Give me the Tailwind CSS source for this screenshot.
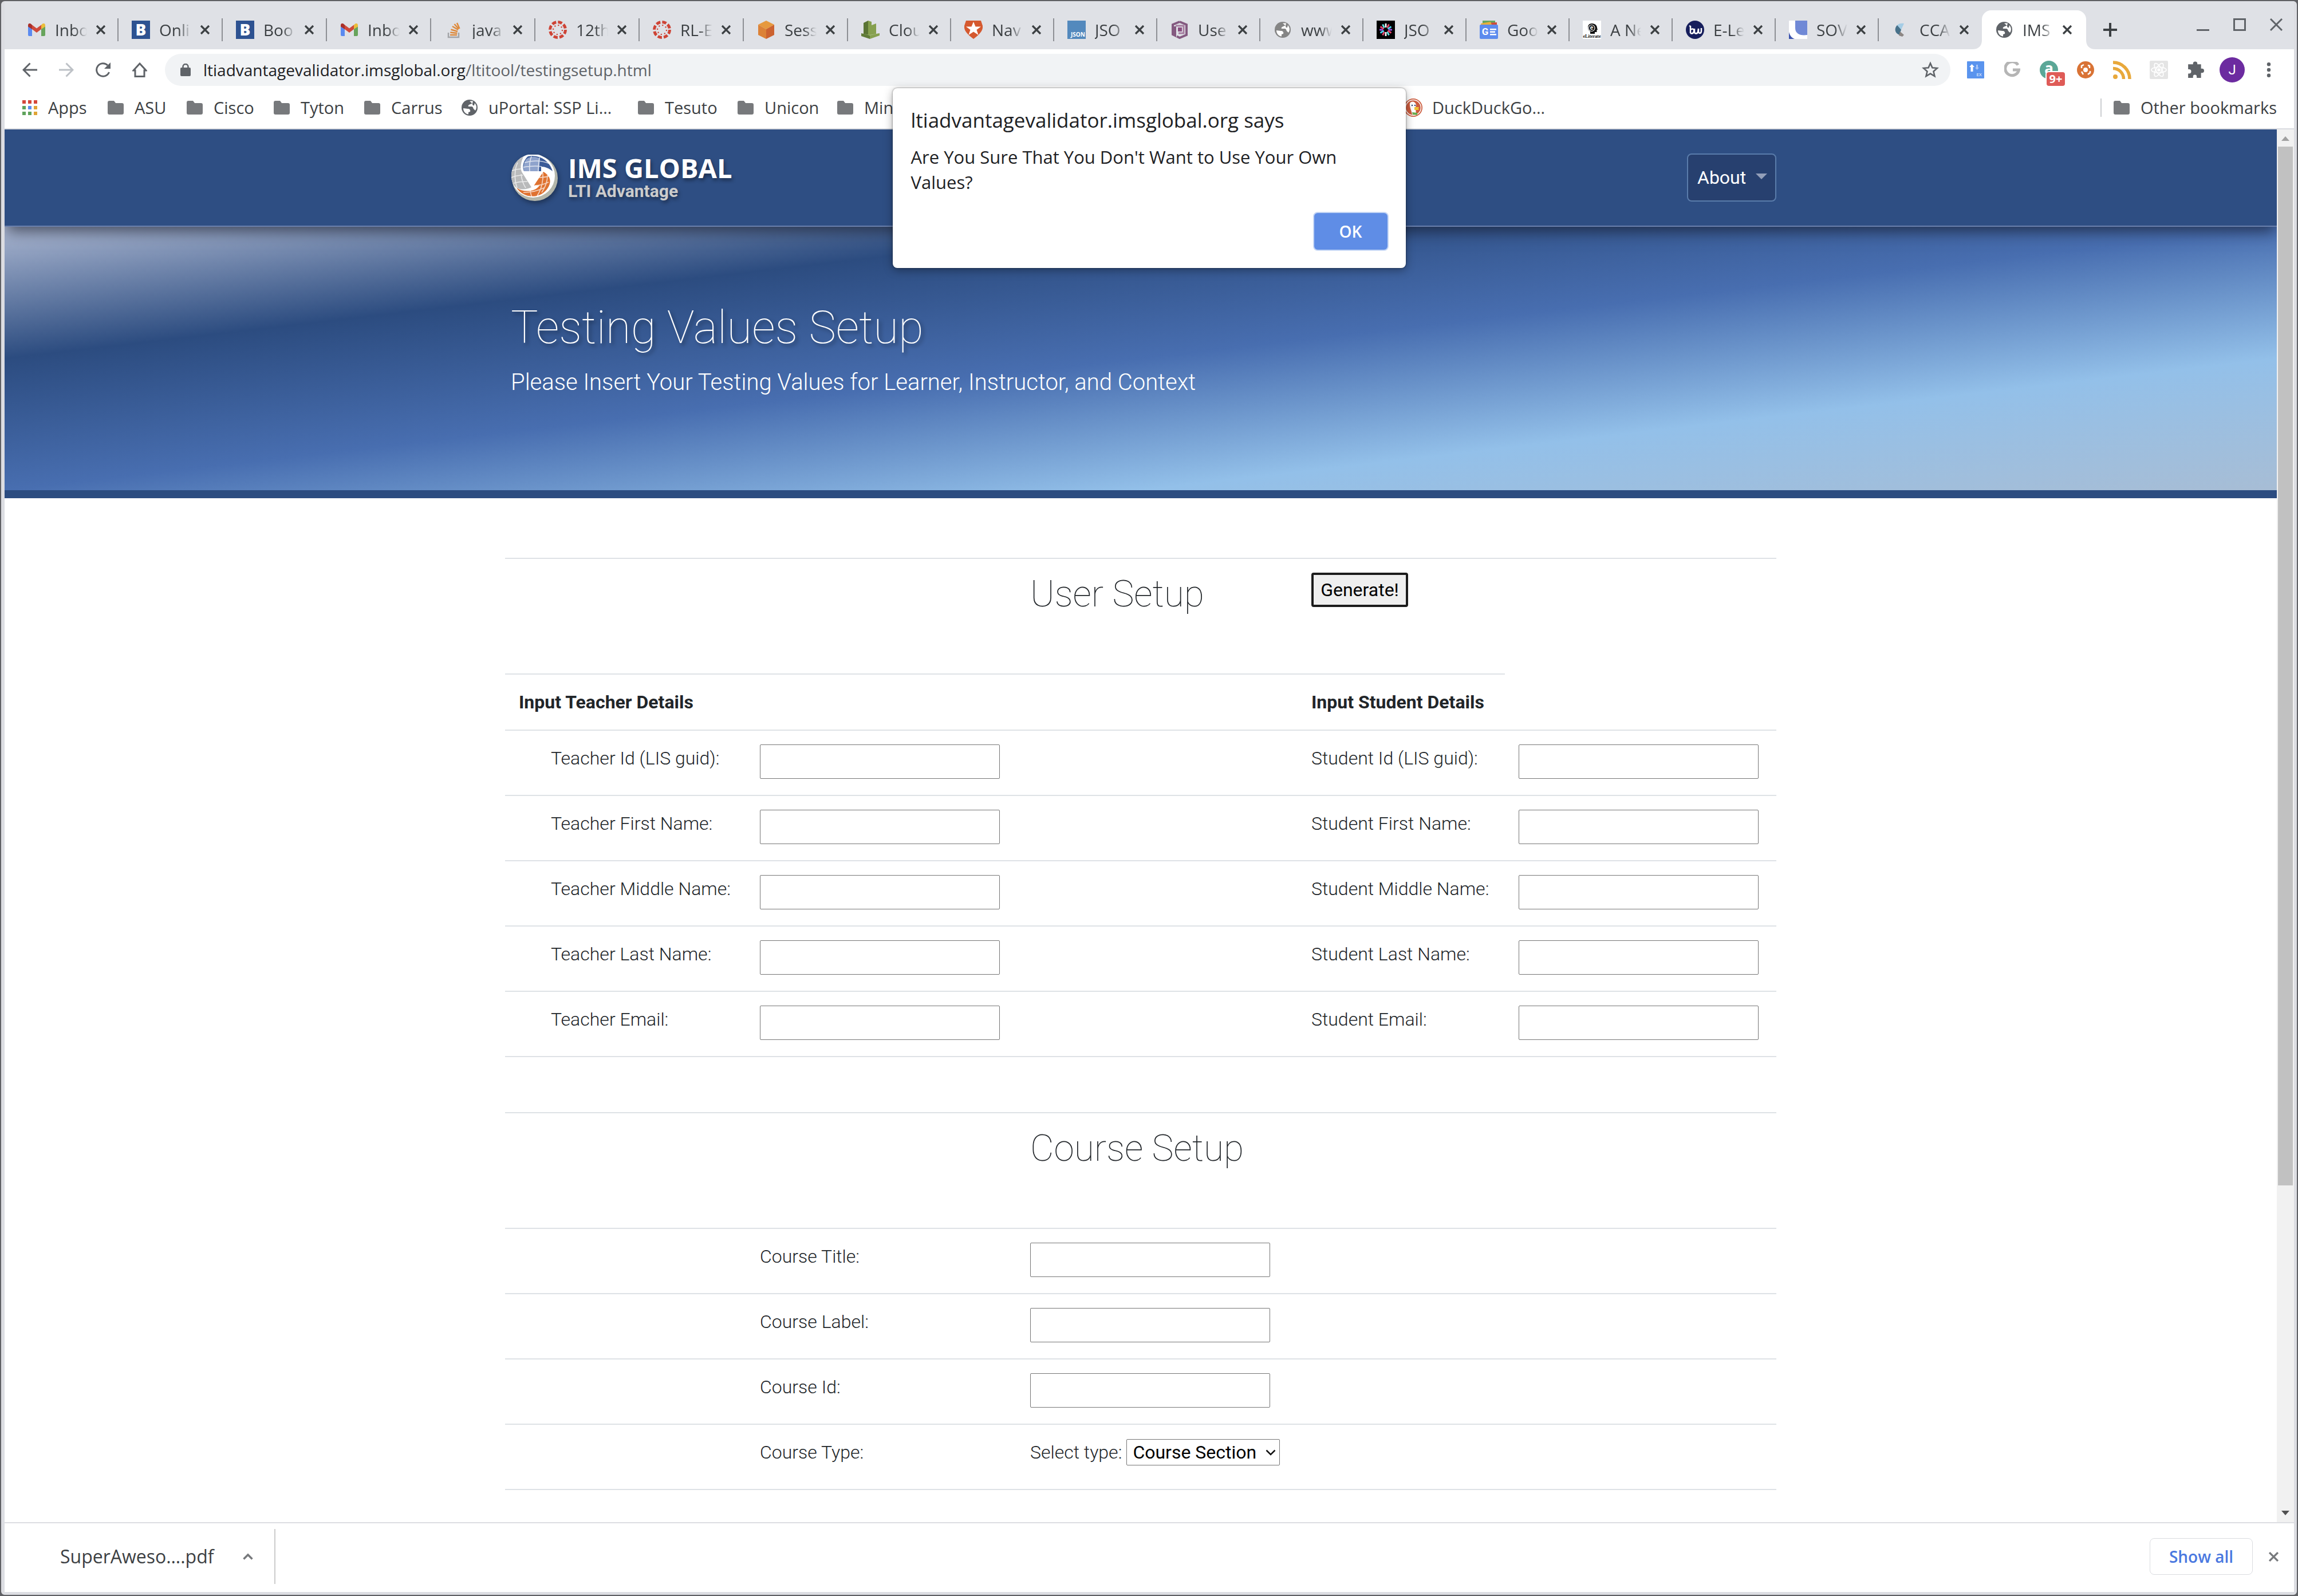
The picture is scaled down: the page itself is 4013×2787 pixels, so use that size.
<!DOCTYPE html>
<html lang="en">
<head>
<meta charset="utf-8">
<title>IMS Global LTI Advantage - Testing Values Setup</title>
<script src="https://cdn.jsdelivr.net/npm/@tailwindcss/browser@4"></script>
</head>
<body class="bg-[#5f6064] font-['Open_Sans',sans-serif] text-[#3c4043]">

<svg class="hidden" aria-hidden="true">
  <symbol id="i-close" viewBox="0 0 18 18"><path d="M2 2l14 14M16 2L2 16" stroke="currentColor" stroke-width="3.2" fill="none"/></symbol>
  <symbol id="i-folder" viewBox="0 0 28 24"><path d="M3 0h8l3 4h11a3 3 0 0 1 3 3v14a3 3 0 0 1-3 3H3a3 3 0 0 1-3-3V3a3 3 0 0 1 3-3z" fill="#77797c"/></symbol>
  <symbol id="i-globe" viewBox="0 0 28 28"><circle cx="14" cy="14" r="14" fill="currentColor"/><path d="M3 15l8 1c3 0 5 2 4 5l-3 1v3.500C7 25 3 21 3 15zM14 2.500h6l-1 4-4 1.500c-2 1-4 2-3 4l6 0c3 1 2 4 4 5l2 2c3-4 2.500-9-1-13l-1 4c-2 1-3-1-3-3z" fill="#fff"/></symbol>
  <symbol id="i-gmail" viewBox="0 0 30 22"><path d="M0 3v17a2 2 0 0 0 2 2h5V9z" fill="#5b8af0"/><path d="M30 3v17a2 2 0 0 1-2 2h-5V9z" fill="#67a45c"/><path d="M23 2.500V10l7-4.500V3c0-3-3-4-5-2.200z" fill="#eabd3b"/><path d="M0 3v2.500L7 10V2.500L5 .8C3 -1 0 0 0 3z" fill="#a9302a"/><path d="M7 2.500V10l8 6 8-6V2.500l-8 6z" fill="#cf4a3b"/></symbol>
  <symbol id="i-boot" viewBox="0 0 32 32"><path d="M0 0h32v32H0z" fill="#2d5291"/><text x="16" y="26" font-family="Open Sans" font-weight="800" font-size="28" text-anchor="middle" fill="#fff">B</text></symbol>
  <symbol id="i-canvas" viewBox="0 0 32 32"><circle cx="16" cy="16" r="13.500" fill="none" stroke="#ce4436" stroke-width="5" stroke-dasharray="7.400 3.200"/><circle cx="16" cy="16" r="8" fill="none" stroke="#ce4436" stroke-width="2.200" stroke-dasharray="2.200 4.080"/></symbol>
</svg>

<div class="flex min-h-screen flex-col overflow-hidden rounded-lg border-2 border-[#5f6064] bg-[#dcdde2] pr-[5px] pb-[5px] pl-1.5">

  <!-- Tab strip -->
  <header class="flex h-[84px] items-end bg-[#dfe1e6] pl-[17px]">
    <nav class="flex h-[68px] text-[28px] leading-8" aria-label="Tabs">
      <div class="flex w-[182px] items-center pl-[23px]">
        <svg class="h-[22px] w-8"><use href="#i-gmail"/></svg>
        <span class="ml-4 w-14 overflow-hidden whitespace-nowrap [mask-image:linear-gradient(to_right,black_60%,transparent)]">Inbo</span>
        <button class="ml-[15px]" aria-label="Close tab"><svg class="block size-[18px]"><use href="#i-close"/></svg></button>
        <i class="ml-auto h-10 w-0.5 bg-[#8d8f94]"></i>
      </div>
      <div class="flex w-[182px] items-center pl-[23px]">
        <svg class="size-8"><use href="#i-boot"/></svg>
        <span class="ml-4 w-14 overflow-hidden whitespace-nowrap [mask-image:linear-gradient(to_right,black_60%,transparent)]">Onli</span>
        <button class="ml-[15px]" aria-label="Close tab"><svg class="block size-[18px]"><use href="#i-close"/></svg></button>
        <i class="ml-auto h-10 w-0.5 bg-[#8d8f94]"></i>
      </div>
      <div class="flex w-[182px] items-center pl-[23px]">
        <svg class="size-8"><use href="#i-boot"/></svg>
        <span class="ml-4 w-14 overflow-hidden whitespace-nowrap [mask-image:linear-gradient(to_right,black_60%,transparent)]">Boo</span>
        <button class="ml-[15px]" aria-label="Close tab"><svg class="block size-[18px]"><use href="#i-close"/></svg></button>
        <i class="ml-auto h-10 w-0.5 bg-[#8d8f94]"></i>
      </div>
      <div class="flex w-[182px] items-center pl-[23px]">
        <svg class="h-[22px] w-8"><use href="#i-gmail"/></svg>
        <span class="ml-4 w-14 overflow-hidden whitespace-nowrap [mask-image:linear-gradient(to_right,black_60%,transparent)]">Inbo</span>
        <button class="ml-[15px]" aria-label="Close tab"><svg class="block size-[18px]"><use href="#i-close"/></svg></button>
        <i class="ml-auto h-10 w-0.5 bg-[#8d8f94]"></i>
      </div>
      <div class="flex w-[182px] items-center pl-[23px]">
        <svg class="size-8" viewBox="0 0 32 32" fill="none"><path d="M7 21v8h18v-8" stroke="#a3a5a8" stroke-width="2.500"/><path d="M10 25h12M10.300 20.500l12 1.500M11.500 15.500l11.500 3.500M14 10l10 6M17.500 6l7.500 8.500M22 4l4.500 10" stroke="#de8a3c" stroke-width="2.500"/></svg>
        <span class="ml-4 w-14 overflow-hidden whitespace-nowrap [mask-image:linear-gradient(to_right,black_60%,transparent)]">java</span>
        <button class="ml-[15px]" aria-label="Close tab"><svg class="block size-[18px]"><use href="#i-close"/></svg></button>
        <i class="ml-auto h-10 w-0.5 bg-[#8d8f94]"></i>
      </div>
      <div class="flex w-[182px] items-center pl-[23px]">
        <svg class="size-8"><use href="#i-canvas"/></svg>
        <span class="ml-4 w-14 overflow-hidden whitespace-nowrap [mask-image:linear-gradient(to_right,black_60%,transparent)]">12th</span>
        <button class="ml-[15px]" aria-label="Close tab"><svg class="block size-[18px]"><use href="#i-close"/></svg></button>
        <i class="ml-auto h-10 w-0.5 bg-[#8d8f94]"></i>
      </div>
      <div class="flex w-[182px] items-center pl-[23px]">
        <svg class="size-8"><use href="#i-canvas"/></svg>
        <span class="ml-4 w-14 overflow-hidden whitespace-nowrap [mask-image:linear-gradient(to_right,black_60%,transparent)]">RL-E</span>
        <button class="ml-[15px]" aria-label="Close tab"><svg class="block size-[18px]"><use href="#i-close"/></svg></button>
        <i class="ml-auto h-10 w-0.5 bg-[#8d8f94]"></i>
      </div>
      <div class="flex w-[182px] items-center pl-[23px]">
        <svg class="size-8" viewBox="0 0 32 32"><path d="M16 0l14 7-14 8L2 7z" fill="#e6993e"/><path d="M2 7l14 8v17L2 25z" fill="#dc8237"/><path d="M30 7l-14 8v17l14-7z" fill="#cc6230"/></svg>
        <span class="ml-4 w-14 overflow-hidden whitespace-nowrap [mask-image:linear-gradient(to_right,black_60%,transparent)]">Sess</span>
        <button class="ml-[15px]" aria-label="Close tab"><svg class="block size-[18px]"><use href="#i-close"/></svg></button>
        <i class="ml-auto h-10 w-0.5 bg-[#8d8f94]"></i>
      </div>
      <div class="flex w-[180px] items-center pl-[23px]">
        <svg class="size-8" viewBox="0 0 32 32"><path d="M4 4l8-4v26l-8-2z" fill="#5a7434"/><path d="M12 0l6 2v6l8-3v19l-14 2z" fill="#86a04e"/><path d="M0 22l14 3 18-3-14 5z" fill="#a9bf80"/><path d="M0 22l15 4v6L0 27z" fill="#607c38"/><path d="M32 22l-17 4v6l17-6z" fill="#86a04e"/></svg>
        <span class="ml-4 w-[54px] overflow-hidden whitespace-nowrap [mask-image:linear-gradient(to_right,black_60%,transparent)]">Clou</span>
        <button class="ml-[15px]" aria-label="Close tab"><svg class="block size-[18px]"><use href="#i-close"/></svg></button>
        <i class="ml-auto h-10 w-0.5 bg-[#8d8f94]"></i>
      </div>
      <div class="flex w-[180px] items-center pl-[23px]">
        <svg class="size-8" viewBox="0 0 32 32"><path d="M3 0h26l3 9c1 8-4 14-16 23C4 23-1 17 0 9z" fill="#d5592f"/><path d="M16 2l3.500 8.500H29l-7.500 5.500 3 9L16 19.500 7.500 25l3-9L3 10.500h9.500z" fill="#fff"/></svg>
        <span class="ml-4 w-[54px] overflow-hidden whitespace-nowrap [mask-image:linear-gradient(to_right,black_60%,transparent)]">Nav</span>
        <button class="ml-[15px]" aria-label="Close tab"><svg class="block size-[18px]"><use href="#i-close"/></svg></button>
        <i class="ml-auto h-10 w-0.5 bg-[#8d8f94]"></i>
      </div>
      <div class="flex w-[180px] items-center pl-[23px]">
        <svg class="size-8" viewBox="0 0 32 32"><path d="M0 0h32v32H0z" fill="#5389bd"/><text x="18.500" y="28" font-family="Open Sans" font-weight="700" font-size="10" text-anchor="middle" fill="#fff">JSON</text></svg>
        <span class="ml-4 w-[54px] overflow-hidden whitespace-nowrap [mask-image:linear-gradient(to_right,black_60%,transparent)]">JSO</span>
        <button class="ml-[15px]" aria-label="Close tab"><svg class="block size-[18px]"><use href="#i-close"/></svg></button>
        <i class="ml-auto h-10 w-0.5 bg-[#8d8f94]"></i>
      </div>
      <div class="flex w-[180px] items-center pl-[23px]">
        <svg class="size-8" viewBox="0 0 32 32" fill="none"><path d="M16 2l12 5v18l-12 5-5-2.500M16 2L4 7v17l4 2V10" stroke="#845a80" stroke-width="4"/><path d="M9 9h14v13h-9" stroke="#a57d9f" stroke-width="3"/><path d="M13 12h7v7h-7z" fill="#8a4f80"/></svg>
        <span class="ml-4 w-[54px] overflow-hidden whitespace-nowrap [mask-image:linear-gradient(to_right,black_60%,transparent)]">Use</span>
        <button class="ml-[15px]" aria-label="Close tab"><svg class="block size-[18px]"><use href="#i-close"/></svg></button>
        <i class="ml-auto h-10 w-0.5 bg-[#8d8f94]"></i>
      </div>
      <div class="flex w-[180px] items-center pl-[23px]">
        <svg class="h-7 w-8 text-[#858585]"><use href="#i-globe"/></svg>
        <span class="ml-4 w-[54px] overflow-hidden whitespace-nowrap [mask-image:linear-gradient(to_right,black_60%,transparent)]">www</span>
        <button class="ml-[15px]" aria-label="Close tab"><svg class="block size-[18px]"><use href="#i-close"/></svg></button>
        <i class="ml-auto h-10 w-0.5 bg-[#8d8f94]"></i>
      </div>
      <div class="flex w-[180px] items-center pl-[23px]">
        <svg class="size-8" viewBox="0 0 32 32" fill="none" stroke-width="2.800"><path d="M0 0h32v32H0z" fill="#000"/><path d="M16 5v7M16 20v7" stroke="#fff"/><path d="M21.500 6.500l-3 6M13.500 19.500l-3 6" stroke="#e8456b"/><path d="M25.500 10.500l-6 4M12.500 17.500l-6 4" stroke="#4fd3ee"/><path d="M27 16h-6M11 16H5" stroke="#9a4fe0"/><path d="M25.500 21.500l-6-4M12.500 14.500l-6-4" stroke="#e8456b"/><path d="M21.500 25.500l-3-6M13.500 12.500l-3-6" stroke="#5fe0e0"/></svg>
        <span class="ml-4 w-[54px] overflow-hidden whitespace-nowrap [mask-image:linear-gradient(to_right,black_60%,transparent)]">JSO</span>
        <button class="ml-[15px]" aria-label="Close tab"><svg class="block size-[18px]"><use href="#i-close"/></svg></button>
        <i class="ml-auto h-10 w-0.5 bg-[#8d8f94]"></i>
      </div>
      <div class="flex w-[180px] items-center pl-[23px]">
        <svg class="size-8" viewBox="0 0 32 32"><path d="M5 0h22v8H5z" fill="#66a562"/><path d="M14 4l16-1v8H16z" fill="#cf4b3a"/><path d="M2 5l17-3 3 8H3z" fill="#e9ae3a"/><rect y="7" width="32" height="25" rx="2" fill="#5c8bee"/><text x="9.500" y="25" font-family="Roboto" font-weight="700" font-size="17" text-anchor="middle" fill="#fff">G</text><path d="M18 14h11v2.500H18zM18 18.500h9V21h-9zM18 23h11v2.500H18z" fill="#fff"/></svg>
        <span class="ml-4 w-[54px] overflow-hidden whitespace-nowrap [mask-image:linear-gradient(to_right,black_60%,transparent)]">Goo</span>
        <button class="ml-[15px]" aria-label="Close tab"><svg class="block size-[18px]"><use href="#i-close"/></svg></button>
        <i class="ml-auto h-10 w-0.5 bg-[#8d8f94]"></i>
      </div>
      <div class="flex w-[180px] items-center pl-[23px]">
        <svg class="size-8" viewBox="0 0 32 32"><path d="M0 0h32v32H0z" fill="#fff"/><path d="M16 5c6 0 9 4 9 8l1 3h-1.500v4H21v3h-8v-4c-3-2-4-4-4-7 0-4 2-7 7-7z" fill="#111"/><circle cx="15.500" cy="13" r="5.500" fill="none" stroke="#fff" stroke-width="1.200"/><text x="15.500" y="16" font-family="Liberation Sans" font-weight="700" font-size="10" text-anchor="middle" fill="#fff">e</text><text x="16" y="30" font-family="Liberation Serif" font-weight="700" font-size="8" text-anchor="middle" fill="#111">eLiterate</text></svg>
        <span class="ml-4 w-[54px] overflow-hidden whitespace-nowrap [mask-image:linear-gradient(to_right,black_60%,transparent)]">A Ne</span>
        <button class="ml-[15px]" aria-label="Close tab"><svg class="block size-[18px]"><use href="#i-close"/></svg></button>
        <i class="ml-auto h-10 w-0.5 bg-[#8d8f94]"></i>
      </div>
      <div class="flex w-[180px] items-center pl-[23px]">
        <svg class="size-8" viewBox="0 0 32 32" fill="none" stroke="#fff" stroke-width="2.500"><circle cx="16" cy="16" r="16" fill="#161e5c" stroke="none"/><path d="M6 9l2 1v12M8 16c4-3 7-1 6 3-.5 3-3 4-6 3M15 14v5c0 5 5 4 6 1l1-6v5c0 4 5 4 5-1v-5"/></svg>
        <span class="ml-4 w-[54px] overflow-hidden whitespace-nowrap [mask-image:linear-gradient(to_right,black_60%,transparent)]">E-Le</span>
        <button class="ml-[15px]" aria-label="Close tab"><svg class="block size-[18px]"><use href="#i-close"/></svg></button>
        <i class="ml-auto h-10 w-0.5 bg-[#8d8f94]"></i>
      </div>
      <div class="flex w-[180px] items-center pl-[23px]">
        <svg class="size-8" viewBox="0 0 32 32"><path d="M0 0h32v32H0z" fill="#fff"/><path d="M11 0h21v25c-12 2-21-2-21-12z" fill="#7089d6"/><path d="M0 20c2 7 5 10 10 12H0z" fill="#3a52ad"/></svg>
        <span class="ml-4 w-[54px] overflow-hidden whitespace-nowrap [mask-image:linear-gradient(to_right,black_60%,transparent)]">SOV</span>
        <button class="ml-[15px]" aria-label="Close tab"><svg class="block size-[18px]"><use href="#i-close"/></svg></button>
        <i class="ml-auto h-10 w-0.5 bg-[#8d8f94]"></i>
      </div>
      <div class="flex w-[180px] items-center pl-[23px]">
        <svg class="size-8" viewBox="0 0 32 32"><path d="M9 8c3-3 7-4 12-3l-5 11-6-3z" fill="#a5cde6"/><path d="M9 8l7 8-3 9C4 22 4 13 9 8z" fill="#47718a"/><path d="M14 19l7 6-3 3-6-2z" fill="#8d8784"/></svg>
        <span class="ml-4 w-[54px] overflow-hidden whitespace-nowrap [mask-image:linear-gradient(to_right,black_60%,transparent)]">CCA</span>
        <button class="ml-[15px]" aria-label="Close tab"><svg class="block size-[18px]"><use href="#i-close"/></svg></button>
      </div>
      <div class="relative flex w-[182px] items-center rounded-t-2xl bg-white pl-[23px]" aria-current="page">
        <svg class="absolute bottom-0 -left-4 size-4" viewBox="0 0 16 16"><path d="M16 0v16H0C10 16 16 10 16 0z" fill="#fff"/></svg>
        <svg class="absolute -right-4 bottom-0 size-4" viewBox="0 0 16 16"><path d="M0 0v16h16C6 16 0 10 0 0z" fill="#fff"/></svg>
        <svg class="h-7 w-8 text-[#5f6368]"><use href="#i-globe"/></svg>
        <span class="ml-4 w-[54px] overflow-hidden whitespace-nowrap [mask-image:linear-gradient(to_right,black_60%,transparent)]">IMS</span>
        <button class="ml-[15px]" aria-label="Close tab"><svg class="block size-[18px]"><use href="#i-close"/></svg></button>
      </div>
      <button class="ml-[30px]" aria-label="New tab"><svg class="block size-6" viewBox="0 0 24 24"><path d="M12 0v24M0 12h24" stroke="#3c4043" stroke-width="4"/></svg></button>
    </nav>
    <div class="mr-5 mb-8 ml-auto flex items-center gap-[42px] text-[#5f6368]">
      <button aria-label="Minimize"><svg class="block size-[22px]" viewBox="0 0 22 22"><path d="M0 20.500h22" stroke="currentColor" stroke-width="3"/></svg></button>
      <button aria-label="Maximize"><svg class="block size-[22px]" viewBox="0 0 22 22"><path d="M1.500 1.500h19v19h-19z" fill="none" stroke="currentColor" stroke-width="3"/></svg></button>
      <button aria-label="Close window"><svg class="block size-[22px]" viewBox="0 0 22 22"><path d="M1 1l20 20M21 1L1 21" stroke="currentColor" stroke-width="3"/></svg></button>
    </div>
  </header>

  <!-- Toolbar -->
  <div class="flex h-[72px] items-center bg-white px-3 text-[#5f6368]">
    <button class="flex w-16 justify-center" aria-label="Back"><svg class="size-[26px]" viewBox="0 0 26 26" fill="none" stroke="currentColor" stroke-width="3"><path d="M26 13H2M13.500 1.500L2 13l11.500 11.500"/></svg></button>
    <button class="flex w-16 justify-center text-[#bdc1c6]" aria-label="Forward"><svg class="size-[26px]" viewBox="0 0 26 26" fill="none" stroke="currentColor" stroke-width="3"><path d="M0 13h24M12.500 1.500L24 13 12.500 24.500"/></svg></button>
    <button class="flex w-16 justify-center" aria-label="Reload"><svg class="size-[26px]" viewBox="0 0 26 26"><path d="M23.500 17A11.300 11.300 0 1 1 21 5" fill="none" stroke="currentColor" stroke-width="3"/><path d="M26 0v11H15z" fill="currentColor"/></svg></button>
    <button class="flex w-16 justify-center" aria-label="Home"><svg class="size-[26px]" viewBox="0 0 26 26"><path d="M5 24.500V14H2L13 2l11 12h-3v10.500z" fill="none" stroke="currentColor" stroke-width="3"/></svg></button>
    <div class="mx-3 flex h-14 flex-1 items-center rounded-full bg-[#f1f3f5] pr-5 pl-[27px]">
      <svg class="h-[22px] w-[18px]" viewBox="0 0 18 22"><rect y="7" width="18" height="15" rx="2" fill="currentColor"/><path d="M4.500 8V5.500a4.500 4.500 0 0 1 9 0V8" fill="none" stroke="currentColor" stroke-width="2.500"/></svg>
      <p class="ml-[22px] flex-1 text-[28px] leading-8" role="textbox" aria-label="Address"><span class="text-[#202124]">ltiadvantagevalidator.imsglobal.org</span>/ltitool/testingsetup.html</p>
      <button aria-label="Bookmark this page"><svg class="block size-[30px]" viewBox="0 0 30 30"><path d="M15 3.500l3.400 7.800 8.600.7-6.500 5.700 2 8.300L15 21.600 7.500 26l2-8.300L3 12l8.600-.7z" fill="none" stroke="currentColor" stroke-width="2.600"/></svg></button>
    </div>
    <button class="flex w-16 justify-center" aria-label="Extension"><svg class="size-[30px]" viewBox="0 0 30 30"><rect width="30" height="30" rx="1" fill="#5a94ee"/><path d="M8.500 5l4.500 5h-2.500v8h-4v-8H4z" fill="#fff"/><path d="M17.500 15l-3.500-4h2V6h3v5h2z" fill="#a9c6f7"/><text x="21" y="26" font-family="Open Sans" font-size="8" text-anchor="middle" fill="#fff">EX</text></svg></button>
    <button class="flex w-16 justify-center" aria-label="Extension"><svg class="size-7" viewBox="0 0 28 28"><path d="M24 5.500A12 12 0 1 0 25.500 14H15" fill="none" stroke="#b5b5b5" stroke-width="5"/></svg></button>
    <button class="relative flex w-16 justify-center" aria-label="Extension"><svg class="size-8" viewBox="0 0 32 32"><circle cx="16" cy="16" r="16" fill="#5ba797"/><text x="16" y="23" font-family="Open Sans" font-weight="700" font-size="26" text-anchor="middle" fill="#fff">a</text></svg><span class="absolute top-5 right-1 flex h-6 w-8 items-center justify-center rounded-sm bg-[#df5b57] text-[20px] leading-6 font-bold text-white ring-2 ring-white">9+</span></button>
    <button class="flex w-16 justify-center" aria-label="Extension"><svg class="size-[30px]" viewBox="0 0 30 30" fill="none" stroke="#fff" stroke-width="2.500"><circle cx="15" cy="15" r="15" fill="#d97335" stroke="none"/><circle cx="15" cy="15" r="4" fill="#fff" stroke="none"/><path d="M8 12V8l4-2M22 12V8l-3-1M8 18l3 5M19 23l4-3v-3"/></svg></button>
    <button class="flex w-16 justify-center" aria-label="Extension"><svg class="size-8" viewBox="0 0 32 32" fill="none" stroke="#e8a83b" stroke-width="5.500"><circle cx="4" cy="28" r="4" fill="#e8a83b" stroke="none"/><path d="M0 13.500A18.500 18.500 0 0 1 18.500 32M0 3a29 29 0 0 1 29 29"/></svg></button>
    <button class="flex w-16 justify-center" aria-label="Extension"><svg class="size-8" viewBox="0 0 32 32" fill="none" stroke="#fff" stroke-width="1.600"><rect width="32" height="32" rx="2" fill="#e4e4e4" stroke="none"/><ellipse cx="16" cy="16" rx="13" ry="5"/><ellipse cx="16" cy="16" rx="13" ry="5" transform="rotate(60 16 16)"/><ellipse cx="16" cy="16" rx="13" ry="5" transform="rotate(120 16 16)"/><circle cx="16" cy="16" r="2" fill="#fff"/></svg></button>
    <button class="flex w-16 justify-center" aria-label="Extensions"><svg class="size-[30px]" viewBox="0 0 28 28"><path d="M2 5h8V4a3.500 3.500 0 0 1 7 0v1h6v7h1.500a3.500 3.500 0 0 1 0 7H23v8h-7v-2a3 3 0 0 0-6 0v2H2v-7h1.500a3.500 3.500 0 0 0 0-7H2z" fill="currentColor"/></svg></button>
    <button class="flex w-16 justify-center" aria-label="Profile"><span class="flex size-11 items-center justify-center rounded-full bg-[#6c2ba0] font-['Roboto'] text-[24px] leading-8 text-white">J</span></button>
    <button class="flex w-16 justify-center" aria-label="Menu"><svg class="h-[26px] w-2" viewBox="0 0 8 26" fill="currentColor"><circle cx="4" cy="3.200" r="3.200"/><circle cx="4" cy="13" r="3.200"/><circle cx="4" cy="22.800" r="3.200"/></svg></button>
  </div>

  <!-- Bookmarks bar -->
  <nav class="flex h-[68px] items-center border-b-2 border-[#dadce0] bg-white pb-1.5 pl-[31px] text-[29px] leading-8 whitespace-nowrap" aria-label="Bookmarks">
    <a href="#" class="flex w-[149px] items-center gap-[19px]"><svg class="size-[26px]" viewBox="0 0 26 26"><path d="M0 0h6v6H0zM10 0h6v6h-6zM20 0h6v6h-6z" fill="#d5473b"/><path d="M0 10h6v6H0zM0 20h6v6H0zM10 20h6v6h-6z" fill="#5fa35c"/><path d="M10 10h6v6h-6z" fill="#5b8cf0"/><path d="M20 10h6v6h-6zM20 20h6v6h-6z" fill="#e0a436"/></svg>Apps</a>
    <a href="#" class="flex w-[138px] items-center gap-[19px]"><svg class="h-6 w-7"><use href="#i-folder"/></svg>ASU</a>
    <a href="#" class="flex w-[152px] items-center gap-[19px]"><svg class="h-6 w-7"><use href="#i-folder"/></svg>Cisco</a>
    <a href="#" class="flex w-[158px] items-center gap-[19px]"><svg class="h-6 w-7"><use href="#i-folder"/></svg>Tyton</a>
    <a href="#" class="flex w-[170px] items-center gap-[19px]"><svg class="h-6 w-7"><use href="#i-folder"/></svg>Carrus</a>
    <a href="#" class="flex w-[308px] items-center gap-[19px]"><svg class="size-7 text-[#5f6368]"><use href="#i-globe"/></svg>uPortal: SSP Li…</a>
    <a href="#" class="flex w-[174px] items-center gap-[19px]"><svg class="h-6 w-7"><use href="#i-folder"/></svg>Tesuto</a>
    <a href="#" class="flex w-[174px] items-center gap-[19px]"><svg class="h-6 w-7"><use href="#i-folder"/></svg>Unicon</a>
    <a href="#" class="flex w-[990px] items-center gap-[19px]"><svg class="h-6 w-7"><use href="#i-folder"/></svg>Min</a>
    <a href="#" class="flex items-center gap-[17px]"><svg class="size-8" viewBox="0 0 32 32"><circle cx="16" cy="16" r="16" fill="#cc5b3d"/><circle cx="16" cy="16" r="13.500" fill="none" stroke="#fff" stroke-width="1.500"/><path d="M10 8c4-5 10-2 11 3l-1 5 1 12c-3 1-5 1-7 0-1-7-5-13-4-20z" fill="#fff"/><path d="M18 15l8 0-1 3 1 2-8 0z" fill="#eec035"/><path d="M14 24l9 1v4l-8-1z" fill="#67ab4c"/><circle cx="14" cy="12" r="1.300" fill="#2f4b7c"/><circle cx="19" cy="12" r="1.300" fill="#2f4b7c"/></svg>DuckDuckGo…</a>
    <a href="#" class="mr-[30px] ml-auto flex h-8 items-center gap-[19px] border-l-2 border-[#ccced1] pl-[21px]"><svg class="h-6 w-7"><use href="#i-folder"/></svg>Other bookmarks</a>
  </nav>

  <!-- Page viewport -->
  <div class="flex flex-1">
    <main class="flex-1 bg-white font-['Roboto',sans-serif] text-[32px] leading-12 font-light text-[#212529]">
      <div class="relative flex h-[170px] justify-center border-b-2 border-[#6a80ad] bg-[#2e4e83] shadow-[0_12px_24px_-4px_rgba(20,25,40,0.65)] [clip-path:inset(0_0_-50px_0)]">
        <div class="flex w-[2220px] justify-between pt-[42px]">
          <a href="#" class="flex gap-4 pl-2 text-shadow-[2px_4px_6px_rgba(0,0,0,0.4)]">
            <svg class="mt-0.5 h-[82px] w-[86px] drop-shadow-[2px_4px_4px_rgba(0,0,0,0.35)]" viewBox="0 0 86 82">
              <circle cx="44" cy="41" r="40" fill="#b4b6aa"/>
              <circle cx="41" cy="37" r="38" fill="#fff"/>
              <path d="M24 4C12 8 3 22 3 38c0 10 5 17 9 20 9 4 18 3 26-1L21 30c-3-8-1-18 3-26z" fill="#b9babb"/>
              <path d="M32 3c20-4 38 8 43 26-6-5-13-8-20-8v8H25C21 20 25 9 32 3z" fill="#3b5b98"/>
              <path d="M29 8c8-6 18-5 24-1l-2 22H25c-2-8 0-15 4-21z" fill="#8fa3cc"/>
              <path d="M59 30l-17 24h10c-8 12-28 12-40 4 12 18 38 20 52 4 10-12 9-24-5-32z" fill="#df7230"/>
              <path d="M26 30h31L42 55z" fill="#fff"/>
              <g fill="none" stroke="#fff" stroke-opacity=".7" stroke-width="1.600"><path d="M4 28c5-2 10-3 16-3M3 40c7-3 13-4 20-4M7 50c8-3 15-3 24-3M14 14c-6 12-6 30-1 44M20 34c1 9 3 17 8 24M26 14c14-4 30-4 44 2M24 22c12-2 22-3 32-1M38 3c-3 8-4 17-3 27M52 5c-1 8-2 16-2 25M52 40c7 0 13-1 19-3M44 54c9 0 16-2 24-6M24 66c12 0 24-2 36-8M58 32c1 12-2 28-10 40M66 36c0 10-3 20-10 30M36 60c0 5 1 10 3 14"/></g>
            </svg>
            <span class="flex flex-col font-bold">
              <span class="font-['Open_Sans',sans-serif] text-[47px] leading-[50px] text-white">IMS GLOBAL</span>
              <span class="text-[30px] leading-8 text-[#ccc]">LTI Advantage</span>
            </span>
          </a>
          <button class="flex h-[84px] w-[156px] items-center gap-[17px] rounded-lg border-2 border-[#5a7cab] bg-[#27406f] pl-4 font-normal text-white">About<svg class="-mt-1 h-2.5 w-5" viewBox="0 0 20 10"><path d="M0 0h20L10 10z" fill="#939fb9"/></svg></button>
        </div>
      </div>

      <section class="flex justify-center border-b-14 border-[#2c4c80] bg-[linear-gradient(to_bottom_right,#aab6d0,#2c4c80_25%,#486eb0_50%,#93c0e9_75%,#a7bdd5)] bg-origin-padding pt-32 pb-[158px] text-white">
        <div class="w-[2220px] px-2.5">
          <h1 class="text-[80px] leading-24 font-thin text-shadow-[4px_4px_6px_rgba(0,0,0,0.4)]">Testing Values Setup</h1>
          <p class="mt-[18px] text-[40px] leading-[60px]">Please Insert Your Testing Values for Learner, Instructor, and Context</p>
        </div>
      </section>

      <form class="mx-auto w-[2220px] pt-[104px]">
        <table class="w-full table-fixed border-separate border-spacing-0 [&_td]:border-t-2 [&_td]:border-[#dee2e6] [&_td]:pt-6 [&_td]:pl-6 [&_td]:align-top [&_th]:border-t-2 [&_th]:border-[#dee2e6] [&_th]:pt-6 [&_th]:pl-6 [&_th]:text-left [&_th]:align-top [&_tr:last-child>td]:border-b-2">
          <colgroup><col class="w-[421px]"><col class="w-[472px]"><col class="w-[491px]"><col class="w-[362px]"><col class="w-[474px]"></colgroup>
          <tbody>
            <tr class="h-[202px]"><td></td><td></td><td class="whitespace-nowrap"><h2 class="text-[64px] leading-[76px] font-thin">User Setup</h2></td>
              <td><button type="button" class="block h-[60px] w-[169px] rounded-sm border-4 border-[#1c1c1c] bg-[#efefef] leading-[52px] font-normal text-black">Generate!</button></td><td></td></tr>
            <tr class="h-[98px]"><th colspan="3" class="font-bold">Input Teacher Details</th><th class="font-bold">Input Student Details</th></tr>
            <tr class="h-[114px]"><td><label class="pl-14" for="tid">Teacher Id (LIS guid):</label></td><td><input id="tid" class="block h-[60px] w-[419px] rounded-xs border border-[#767676] bg-white"></td><td></td><td><label for="sid">Student Id (LIS guid):</label></td><td><input id="sid" class="block h-[60px] w-[419px] rounded-xs border border-[#767676] bg-white"></td></tr>
            <tr class="h-[114px]"><td><label class="pl-14" for="tfn">Teacher First Name:</label></td><td><input id="tfn" class="block h-[60px] w-[419px] rounded-xs border border-[#767676] bg-white"></td><td></td><td><label for="sfn">Student First Name:</label></td><td><input id="sfn" class="block h-[60px] w-[419px] rounded-xs border border-[#767676] bg-white"></td></tr>
            <tr class="h-[114px]"><td><label class="pl-14" for="tmn">Teacher Middle Name:</label></td><td><input id="tmn" class="block h-[60px] w-[419px] rounded-xs border border-[#767676] bg-white"></td><td></td><td><label for="smn">Student Middle Name:</label></td><td><input id="smn" class="block h-[60px] w-[419px] rounded-xs border border-[#767676] bg-white"></td></tr>
            <tr class="h-[114px]"><td><label class="pl-14" for="tln">Teacher Last Name:</label></td><td><input id="tln" class="block h-[60px] w-[419px] rounded-xs border border-[#767676] bg-white"></td><td></td><td><label for="sln">Student Last Name:</label></td><td><input id="sln" class="block h-[60px] w-[419px] rounded-xs border border-[#767676] bg-white"></td></tr>
            <tr class="h-[116px]"><td><label class="pl-14" for="tem">Teacher Email:</label></td><td><input id="tem" class="block h-[60px] w-[419px] rounded-xs border border-[#767676] bg-white"></td><td></td><td><label for="sem">Student Email:</label></td><td><input id="sem" class="block h-[60px] w-[419px] rounded-xs border border-[#767676] bg-white"></td></tr>
          </tbody>
        </table>

        <table class="mt-24 w-full table-fixed border-separate border-spacing-0 [&_td]:border-t-2 [&_td]:border-[#dee2e6] [&_td]:pt-6 [&_td]:pl-6 [&_td]:align-top [&_tr:last-child>td]:border-b-2">
          <colgroup><col class="w-[421px]"><col class="w-[472px]"><col class="w-[491px]"><col class="w-[836px]"></colgroup>
          <tbody>
            <tr class="h-[202px]"><td></td><td></td><td class="whitespace-nowrap"><h2 class="text-[64px] leading-[76px] font-thin">Course Setup</h2></td><td></td></tr>
            <tr class="h-[114px]"><td></td><td><label for="ct">Course Title:</label></td><td><input id="ct" class="block h-[60px] w-[419px] rounded-xs border border-[#767676] bg-white"></td><td></td></tr>
            <tr class="h-[114px]"><td></td><td><label for="cl">Course Label:</label></td><td><input id="cl" class="block h-[60px] w-[419px] rounded-xs border border-[#767676] bg-white"></td><td></td></tr>
            <tr class="h-[114px]"><td></td><td><label for="ci">Course Id:</label></td><td><input id="ci" class="block h-[60px] w-[419px] rounded-xs border border-[#767676] bg-white"></td><td></td></tr>
            <tr class="h-[116px]"><td></td><td>Course Type:</td><td>
              <div class="flex items-center gap-2 whitespace-nowrap"><label for="cty">Select type:</label>
                <div class="relative"><select id="cty" class="block h-[46px] w-[268px] appearance-none rounded-xs border border-[#767676] bg-white pl-2.5 leading-11 font-normal text-black"><option>Course Section</option></select>
                <svg class="pointer-events-none absolute top-[18px] right-[7px] h-3 w-[18px]" viewBox="0 0 18 12"><path d="M1.500 1.500L9 9l7.500-7.500" fill="none" stroke="#111" stroke-width="2.500"/></svg></div></div></td><td></td></tr>
          </tbody>
        </table>
      </form>
    </main>
    <div class="flex w-[30px] flex-col items-center bg-[#f1f1f1]" aria-hidden="true">
      <svg class="mt-3 mb-2.5 h-2 w-3.5" viewBox="0 0 14 8"><path d="M7 0l7 8H0z" fill="#a0a0a0"/></svg>
      <div class="h-[1814px] w-[26px] bg-[#c1c1c1]"></div>
      <svg class="mt-auto mb-3 h-2 w-3.5" viewBox="0 0 14 8"><path d="M7 8l7-8H0z" fill="#505050"/></svg>
    </div>
  </div>

  <!-- Downloads shelf -->
  <footer class="flex h-[122px] items-center border-t-2 border-[#dcdde2] bg-white pr-[26px] pb-1">
    <a href="#" class="pl-[97px] text-[32px] leading-12">SuperAweso….pdf</a>
    <button class="ml-[50px]" aria-label="Download options"><svg class="block h-3 w-[18px]" viewBox="0 0 18 12"><path d="M1.500 10.500L9 3l7.500 7.500" fill="none" stroke="#77797c" stroke-width="3.500"/></svg></button>
    <i class="ml-[37px] h-24 w-0.5 bg-[#cccccc]"></i>
    <button class="ml-auto h-16 w-[180px] rounded-lg border border-[#dadce0] text-[28px] leading-8 font-semibold text-[#4a78e0]">Show all</button>
    <button class="ml-[27px] text-[#77797c]" aria-label="Close downloads"><svg class="block size-[19px]"><use href="#i-close"/></svg></button>
  </footer>
</div>

<!-- Alert -->
<div role="alertdialog" aria-labelledby="alert-title" class="absolute top-[154px] left-1/2 flex w-[896px] -translate-x-1/2 flex-col rounded-lg bg-white pt-8 pr-[30px] pb-[30px] pl-8 text-[#202124] shadow-[0_4px_16px_rgba(0,0,0,0.35),0_0_3px_rgba(0,0,0,0.5)]">
  <h2 id="alert-title" class="text-[35px] leading-12">ltiadvantagevalidator.imsglobal.org says</h2>
  <p class="mt-[18px] text-[31px] leading-11">Are You Sure That You Don't Want to Use Your Own Values?</p>
  <button class="mt-[30px] h-[68px] w-[132px] self-end rounded-lg border-2 border-[#c5d6f5] bg-[#5f8de6] text-[28px] leading-8 font-semibold text-white">OK</button>
</div>
</body>
</html>
